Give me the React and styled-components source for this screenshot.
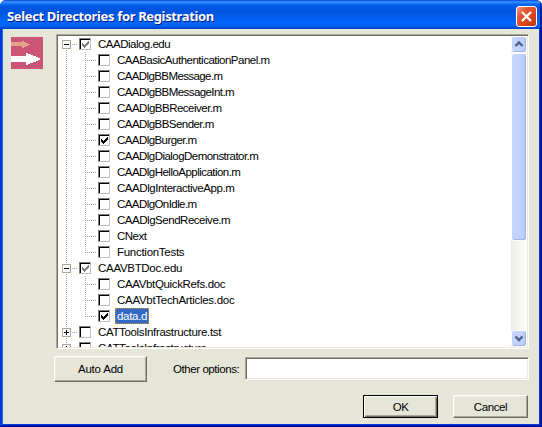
import React from "react";
import styled, { createGlobalStyle, css } from "styled-components";

const GlobalStyle = createGlobalStyle`
  body { margin: 0; background: #fff; overflow: hidden; }
  * { box-sizing: border-box; }
`;

const face = "#e6e6d8";

const Dialog = styled.div`
  width: 542px;
  height: 427px;
  display: flex;
  flex-direction: column;
  overflow: hidden;
  border-radius: 6px 6px 0 0;
  font: 11.5px/16px "Liberation Sans", Arial, sans-serif;
  color: #000;
  background: #0046e0;
`;

const TitleBar = styled.header`
  flex: 0 0 29px;
  display: flex;
  align-items: center;
  justify-content: space-between;
  padding: 3px 5px 0 7px;
  box-shadow: inset -2px 0 0 #0020a8;
  background: linear-gradient(
    #0048d8 0, #3a93ff 2px, #0a6cf5 4px, #0058e4 6px, #0054e0 12px,
    #005ff0 18px, #0067fb 23px, #0060f0 26px, #0040c4 29px
  );
`;

const Title = styled.h1`
  margin: 0;
  font: bold 13px/20px "Noto Sans", sans-serif;
  letter-spacing: ${(p) => p.$spacing}px;
  color: #fff;
  text-shadow: 1px 1px 0 #0a1883;
  white-space: nowrap;
`;

const CloseButton = styled.button`
  width: 21px;
  height: 21px;
  padding: 0;
  display: flex;
  border: 1px solid #fff;
  border-radius: 3px;
  background: linear-gradient(135deg, #f0a084 0, #e05a38 30%, #d9451c 65%, #b83410 100%);
`;

const Body = styled.main`
  flex: 1;
  display: flex;
  border: 2px solid #00129a;
  border-top: 0;
  border-left-color: #0038dc;
  box-shadow: inset 1px 0 0 #1566f2, inset -1px -1px 0 #0040e0;
  background: ${face};
`;

const IconColumn = styled.aside`
  flex: 0 0 52px;
  padding: 8px 0 0 9px;
`;

const Content = styled.section`
  width: 475px;
  display: flex;
  flex-direction: column;
`;

const sunken = css`
  border: 1px solid;
  border-color: #aca899 #fff #fff #aca899;
  box-shadow: inset 1px 1px 0 #716f64, inset -1px -1px 0 #f1e8e0;
  background: #fff;
`;

const TreePanel = styled.div`
  ${sunken}
  display: flex;
  height: 315px;
  margin: 5px 0 0 2px;
  padding: 1px;
`;

const TreeList = styled.div`
  flex: 1;
  height: 311px;
  overflow: hidden;
`;

const Row = styled.div`
  display: flex;
  height: 16px;
  align-items: center;
`;

const vertical = "repeating-linear-gradient(#aca899 0 1px, transparent 1px 2px)";
const horizontal = "repeating-linear-gradient(90deg, #aca899 0 1px, transparent 1px 2px)";

const RootGuide = styled.div`
  flex: 0 0 19px;
  height: 16px;
  padding: 4px 0 0 4px;
  background-image: ${vertical}, ${(p) => (p.$branch ? horizontal : "none")};
  background-repeat: no-repeat;
  background-position: 8px ${(p) => (p.$first ? 8 : 0)}px, 14px 8px;
  background-size: 1px 16px, 5px 1px;
`;

const ChildGuide = styled.div`
  flex: 0 0 19px;
  height: 16px;
  background-image: ${vertical}, ${horizontal};
  background-repeat: no-repeat;
  background-position: 8px 0, 8px 8px;
  background-size: 1px ${(p) => (p.$last ? 8 : 16)}px, 11px 1px;
`;

const Expander = styled.svg`
  display: block;
  width: 9px;
  height: 9px;
`;

const CheckBox = styled.span`
  flex: 0 0 12px;
  height: 12px;
  margin: 0 5px 0 2px;
  border: 1px solid;
  border-color: #808080 #c0c0c0 #c0c0c0 #808080;
  box-shadow: inset 1px 1px 0 #000;
  background: #fff;
  svg { display: block; width: 10px; height: 10px; }
`;

const Label = styled.span`
  height: 16px;
  padding: 0 2px;
  line-height: 16px;
  white-space: nowrap;
  letter-spacing: ${(p) => p.$spacing}px;
  ${(p) => p.$selected && css`
    padding: 0 2px;
    outline: 1px dotted #d98c28;
    outline-offset: -1px;
    color: #fff;
    background: #316ac5;
  `}
`;

const ScrollBar = styled.div`
  width: 16px;
  height: 311px;
  display: flex;
  flex-direction: column;
  background: linear-gradient(90deg, #eeede5, #fefefb);
`;

const ScrollPart = styled.div`
  height: ${(p) => p.$height}px;
  margin: ${(p) => p.$margin || "0"};
  border: 1px solid #fff;
  border-radius: 3px;
  box-shadow: inset -1px -1px 0 #9cb5ee;
  background: linear-gradient(90deg, #c6d5fd, #c4d2fb 60%, #b4c8f6);
  svg { display: block; width: 14px; height: 14px; }
`;

const OptionsRow = styled.div`
  display: flex;
  align-items: flex-start;
  margin-top: 7px;
`;

const OptionLabel = styled.label`
  width: 98px;
  padding: 5px 0 0 26px;
  white-space: nowrap;
  letter-spacing: ${(p) => p.$spacing}px;
`;

const TextInput = styled.input`
  ${sunken}
  width: 284px;
  height: 23px;
  margin: 1px 0 0;
  outline: none;
`;

const Button = styled.button`
  width: ${(p) => p.$width}px;
  height: ${(p) => p.$height}px;
  padding: 0;
  font: inherit;
  color: #000;
  letter-spacing: ${(p) => p.$spacing}px;
  border: 1px solid;
  border-color: ${(p) => (p.$default ? "#000" : "#fff #716f64 #716f64 #fff")};
  box-shadow: ${(p) => (p.$default
    ? "inset 1px 1px 0 #fff, inset -1px -1px 0 #716f64, inset -2px -2px 0 #aca899"
    : "inset -1px -1px 0 #aca899, inset 1px 1px 0 #f1e9de")};
  background: ${face};
`;

const Actions = styled.footer`
  display: flex;
  justify-content: flex-end;
  gap: 15px;
  margin-top: 13px;
  padding-right: 1px;
`;

const tree = [
  {
    name: "CAADialog.edu", open: true, check: "gray", spacing: -0.5,
    children: [
      ["CAABasicAuthenticationPanel.m", -0.49],
      ["CAADlgBBMessage.m", -0.6],
      ["CAADlgBBMessageInt.m", -0.57],
      ["CAADlgBBReceiver.m", -0.51],
      ["CAADlgBBSender.m", -0.55],
      ["CAADlgBurger.m", -0.57, true],
      ["CAADlgDialogDemonstrator.m", -0.54],
      ["CAADlgHelloApplication.m", -0.53],
      ["CAADlgInteractiveApp.m", -0.45],
      ["CAADlgOnIdle.m", -0.57],
      ["CAADlgSendReceive.m", -0.47],
      ["CNext", -0.5],
      ["FunctionTests", -0.28],
    ],
  },
  {
    name: "CAAVBTDoc.edu", open: true, check: "gray", spacing: -0.3,
    children: [
      ["CAAVbtQuickRefs.doc", -0.35],
      ["CAAVbtTechArticles.doc", -0.29],
      ["data.d", -0.3, true, true],
    ],
  },
  { name: "CATToolsInfrastructure.tst", spacing: -0.35, children: [] },
  { name: "CATToolsInfrastructure", spacing: -0.37, children: [] },
];

function Check({ state }) {
  return (
    <CheckBox>
      {state && (
        <svg viewBox="0 0 10 10" shapeRendering="crispEdges">
          <path
            d="M2 4h1v3h-1zM3 5h1v3h-1zM4 6h1v3h-1zM5 5h1v3h-1zM6 4h1v3h-1zM7 3h1v3h-1zM8 2h1v3h-1z"
            fill={state === "gray" ? "#808080" : "#000"}
          />
        </svg>
      )}
    </CheckBox>
  );
}

function Toggle({ open }) {
  return (
    <Expander viewBox="0 0 9 9" shapeRendering="crispEdges">
      <path d="M0 0h9v9h-9z" fill="#aca899" />
      <path d="M1 1h7v7h-7z" fill="#fff" />
      <path d={open ? "M2 4h5v1h-5z" : "M2 4h5v1h-5zM4 2h1v5h-1z"} fill="#000" />
    </Expander>
  );
}

function Branch({ node, first }) {
  return (
    <>
      <Row>
        <RootGuide $branch $first={first}><Toggle open={node.open} /></RootGuide>
        <Check state={node.check} />
        <Label $spacing={node.spacing}>{node.name}</Label>
      </Row>
      {node.children.map(([name, spacing, checked, selected], i) => (
        <Row key={name}>
          <RootGuide />
          <ChildGuide $last={i === node.children.length - 1} />
          <Check state={checked ? "black" : null} />
          <Label $spacing={spacing} $selected={selected}>{name}</Label>
        </Row>
      ))}
    </>
  );
}

function ArrowsIcon() {
  return (
    <svg width="32" height="32" viewBox="0 0 32 32" shapeRendering="crispEdges">
      <defs>
        <pattern id="weave" width="4" height="4" patternUnits="userSpaceOnUse">
          <path d="M0 0h4v4h-4z" fill="#cc5078" />
          <path d="M0 0h1v1h-1zM2 2h1v1h-1z" fill="#c8685c" />
          <path d="M2 0h1v1h-1zM0 2h1v1h-1z" fill="#b85090" />
          <path d="M1 1h1v1h-1zM3 3h1v1h-1z" fill="#d85c70" />
        </pattern>
      </defs>
      <path d="M0 0h32v32h-32z" fill="url(#weave)" />
      <path d="M0 5h11v-1h2v1h2v1h2v1h2v1h-2v1h-2v1h-2v1h-2v-2h-11z" fill="#e3a48c" />
      <path d="M0 19h15v-3h2v1h3v1h2v1h3v1h2v1h2v2h-2v1h-2v1h-3v1h-3v1h-2v1h-2v-3h-15z" fill="#fff" />
    </svg>
  );
}

function Chevron({ up }) {
  return (
    <svg viewBox="0 0 14 14">
      <path d={up ? "M3.5 9L7 5.5L10.5 9" : "M3.5 5.5L7 9L10.5 5.5"} fill="none" stroke="#4d6185" strokeWidth="2.4" />
    </svg>
  );
}

export default function App() {
  return (
    <>
      <GlobalStyle />
      <Dialog>
        <TitleBar>
          <Title $spacing={-0.35}>Select Directories for Registration</Title>
          <CloseButton aria-label="Close">
            <svg width="19" height="19" viewBox="0 0 19 19">
              <path d="M5 5L14 14M14 5L5 14" stroke="#fff" strokeWidth="2.4" />
            </svg>
          </CloseButton>
        </TitleBar>
        <Body>
          <IconColumn><ArrowsIcon /></IconColumn>
          <Content>
            <TreePanel>
              <TreeList>
                {tree.map((node, i) => <Branch key={node.name} node={node} first={i === 0} />)}
              </TreeList>
              <ScrollBar>
                <ScrollPart $height={17}><Chevron up /></ScrollPart>
                <ScrollPart $height={188} />
                <ScrollPart $height={17} $margin="auto 0 0"><Chevron /></ScrollPart>
              </ScrollBar>
            </TreePanel>
            <OptionsRow>
              <Button $width={93} $height={26} $spacing={-0.2}>Auto Add</Button>
              <OptionLabel htmlFor="options" $spacing={-0.43}>Other options:</OptionLabel>
              <TextInput id="options" />
            </OptionsRow>
            <Actions>
              <Button $width={75} $height={23} $spacing={-0.5} $default>OK</Button>
              <Button $width={75} $height={23} $spacing={-0.4}>Cancel</Button>
            </Actions>
          </Content>
        </Body>
      </Dialog>
    </>
  );
}
